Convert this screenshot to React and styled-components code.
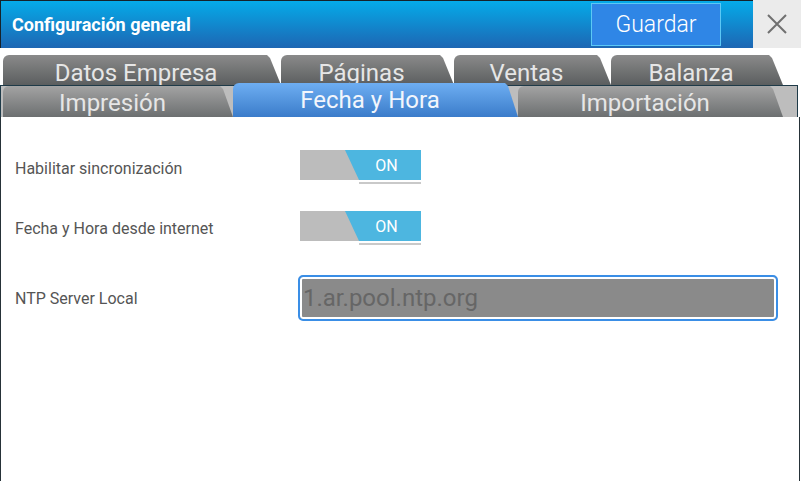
import React from 'react'
import styled, { createGlobalStyle } from 'styled-components'

const GlobalStyle = createGlobalStyle`
  html, body {
    margin: 0;
    padding: 0;
    background: #ffffff;
  }
  body {
    font-family: Roboto, "Liberation Sans", Arial, sans-serif;
  }
  * {
    box-sizing: border-box;
  }
`

const Window = styled.div`
  width: 801px;
  height: 481px;
  display: flex;
  flex-direction: column;
  overflow: hidden;
  background: #ffffff;
`

const Header = styled.div`
  display: flex;
  height: 48px;
`

const TitleBar = styled.div`
  flex: 1;
  display: flex;
  align-items: center;
  justify-content: space-between;
  padding: 0 32px 0 11px;
  background: linear-gradient(#05abe9, #1d66b3);
  border-left: 1px solid #16222a;
  border-top: 1px solid #16222a;
`

const Title = styled.div`
  color: #ffffff;
  font-size: 18px;
  font-weight: 700;
`

const SaveButton = styled.button`
  width: 130px;
  height: 43px;
  padding: 0;
  background: #2f86e6;
  border: 1px solid #5cc8f5;
  color: #ffffff;
  font-family: Roboto, "Liberation Sans", Arial, sans-serif;
  font-size: 23px;
  font-weight: 300;
  cursor: pointer;
`

const CloseButton = styled.button`
  width: 48px;
  height: 48px;
  padding: 0;
  border: none;
  background: #ebebeb;
  display: flex;
  align-items: center;
  justify-content: center;
  cursor: pointer;
`

const TabRowTop = styled.div`
  display: flex;
  height: 30px;
  margin-top: 7px;
  padding-left: 3px;
`

const TabRowBottom = styled.div`
  display: flex;
  align-items: flex-end;
  height: 32px;
  padding-left: 2px;
  width: 798px;
  background: #bdbdbd;
  border: 1px solid #1e3a48;
  border-bottom: none;
`

const Tab = styled.div`
  flex: none;
  width: ${p => p.$w}px;
  height: ${p => (p.$active ? 34 : p.$top ? 30 : 31)}px;
  padding: ${p => (p.$top ? 4 : 3)}px ${p => p.$slant}px 0 0;
  line-height: 28px;
  text-align: center;
  white-space: nowrap;
  font-size: 24px;
  color: ${p => (p.$active ? '#f2f6fc' : '#e6e6e6')};
  border-top-left-radius: 6px;
  clip-path: polygon(0 0, calc(100% - ${p => p.$slant + 2}px) 0, calc(100% - ${p => p.$slant - 1}px) 3px, 100% 100%, 0 100%);
  background: ${p =>
    p.$active
      ? 'linear-gradient(#6eaef2, #3b7cca)'
      : p.$top
      ? 'linear-gradient(#8a8a8a, #5b5e5f)'
      : 'linear-gradient(#a3a3a3, #6c6f70)'};
  cursor: pointer;
`

const Content = styled.div`
  flex: 1;
  padding: 33px 0 0 14px;
  border-left: 1px solid #263238;
  border-right: 1px solid #263238;
  width: 800px;
`

const Row = styled.div`
  display: flex;
  align-items: flex-start;
  margin-bottom: ${p => p.$gap || 0}px;
`

const Label = styled.div`
  width: 285px;
  flex: none;
  margin-top: ${p => p.$offset}px;
  font-size: 16px;
  line-height: 18px;
  color: #555555;
`

const Switch = styled.div`
  display: flex;
  flex-direction: column;
  align-items: flex-end;
  width: 121px;
`

const Track = styled.div`
  width: 121px;
  height: 30px;
  background: #bcbcbc;
`

const OnPart = styled.div`
  width: 100%;
  height: 100%;
  display: flex;
  align-items: center;
  justify-content: center;
  padding-left: 52px;
  background: #4db6e0;
  color: #ffffff;
  font-size: 16px;
  clip-path: polygon(45px 0, 100% 0, 100% 100%, 59px 100%);
`

const Underline = styled.div`
  width: 62px;
  height: 2px;
  margin-top: 2px;
  background: #c9c9c9;
`

const TextField = styled.input`
  width: 480px;
  height: 46px;
  margin-left: -2px;
  padding: 0 0 0 3px;
  border: 2px solid #3a8ee6;
  border-radius: 5px;
  background: #8a8a8a;
  box-shadow: inset 0 0 0 2px #ffffff;
  color: #666666;
  font-family: Roboto, "Liberation Sans", Arial, sans-serif;
  font-size: 24px;
  outline: none;
`

const topTabs = [
  { label: 'Datos Empresa', w: 278 },
  { label: 'Páginas', w: 173 },
  { label: 'Ventas', w: 157 },
  { label: 'Balanza', w: 172 },
]

const bottomTabs = [
  { label: 'Impresión', w: 230 },
  { label: 'Fecha y Hora', w: 285, active: true },
  { label: 'Importación', w: 265 },
]

const Toggle = () => (
  <Switch>
    <Track>
      <OnPart>ON</OnPart>
    </Track>
    <Underline />
  </Switch>
)

export default function App() {
  return (
    <Window>
      <GlobalStyle />
      <Header>
        <TitleBar>
          <Title>Configuración general</Title>
          <SaveButton>Guardar</SaveButton>
        </TitleBar>
        <CloseButton>
          <svg width="20" height="20" viewBox="0 0 20 20">
            <path d="M1 1 L19 19 M19 1 L1 19" stroke="#707070" strokeWidth="2" fill="none" />
          </svg>
        </CloseButton>
      </Header>

      <TabRowTop>
        {topTabs.map(t => (
          <Tab key={t.label} $w={t.w} $slant={12} $top>
            {t.label}
          </Tab>
        ))}
      </TabRowTop>
      <TabRowBottom>
        {bottomTabs.map(t => (
          <Tab key={t.label} $w={t.w} $slant={11} $active={t.active}>
            {t.label}
          </Tab>
        ))}
      </TabRowBottom>

      <Content>
        <Row $gap={27}>
          <Label $offset={10}>Habilitar sincronización</Label>
          <Toggle />
        </Row>
        <Row $gap={30}>
          <Label $offset={9}>Fecha y Hora desde internet</Label>
          <Toggle />
        </Row>
        <Row>
          <Label $offset={15}>NTP Server Local</Label>
          <TextField readOnly value="1.ar.pool.ntp.org" />
        </Row>
      </Content>
    </Window>
  )
}
